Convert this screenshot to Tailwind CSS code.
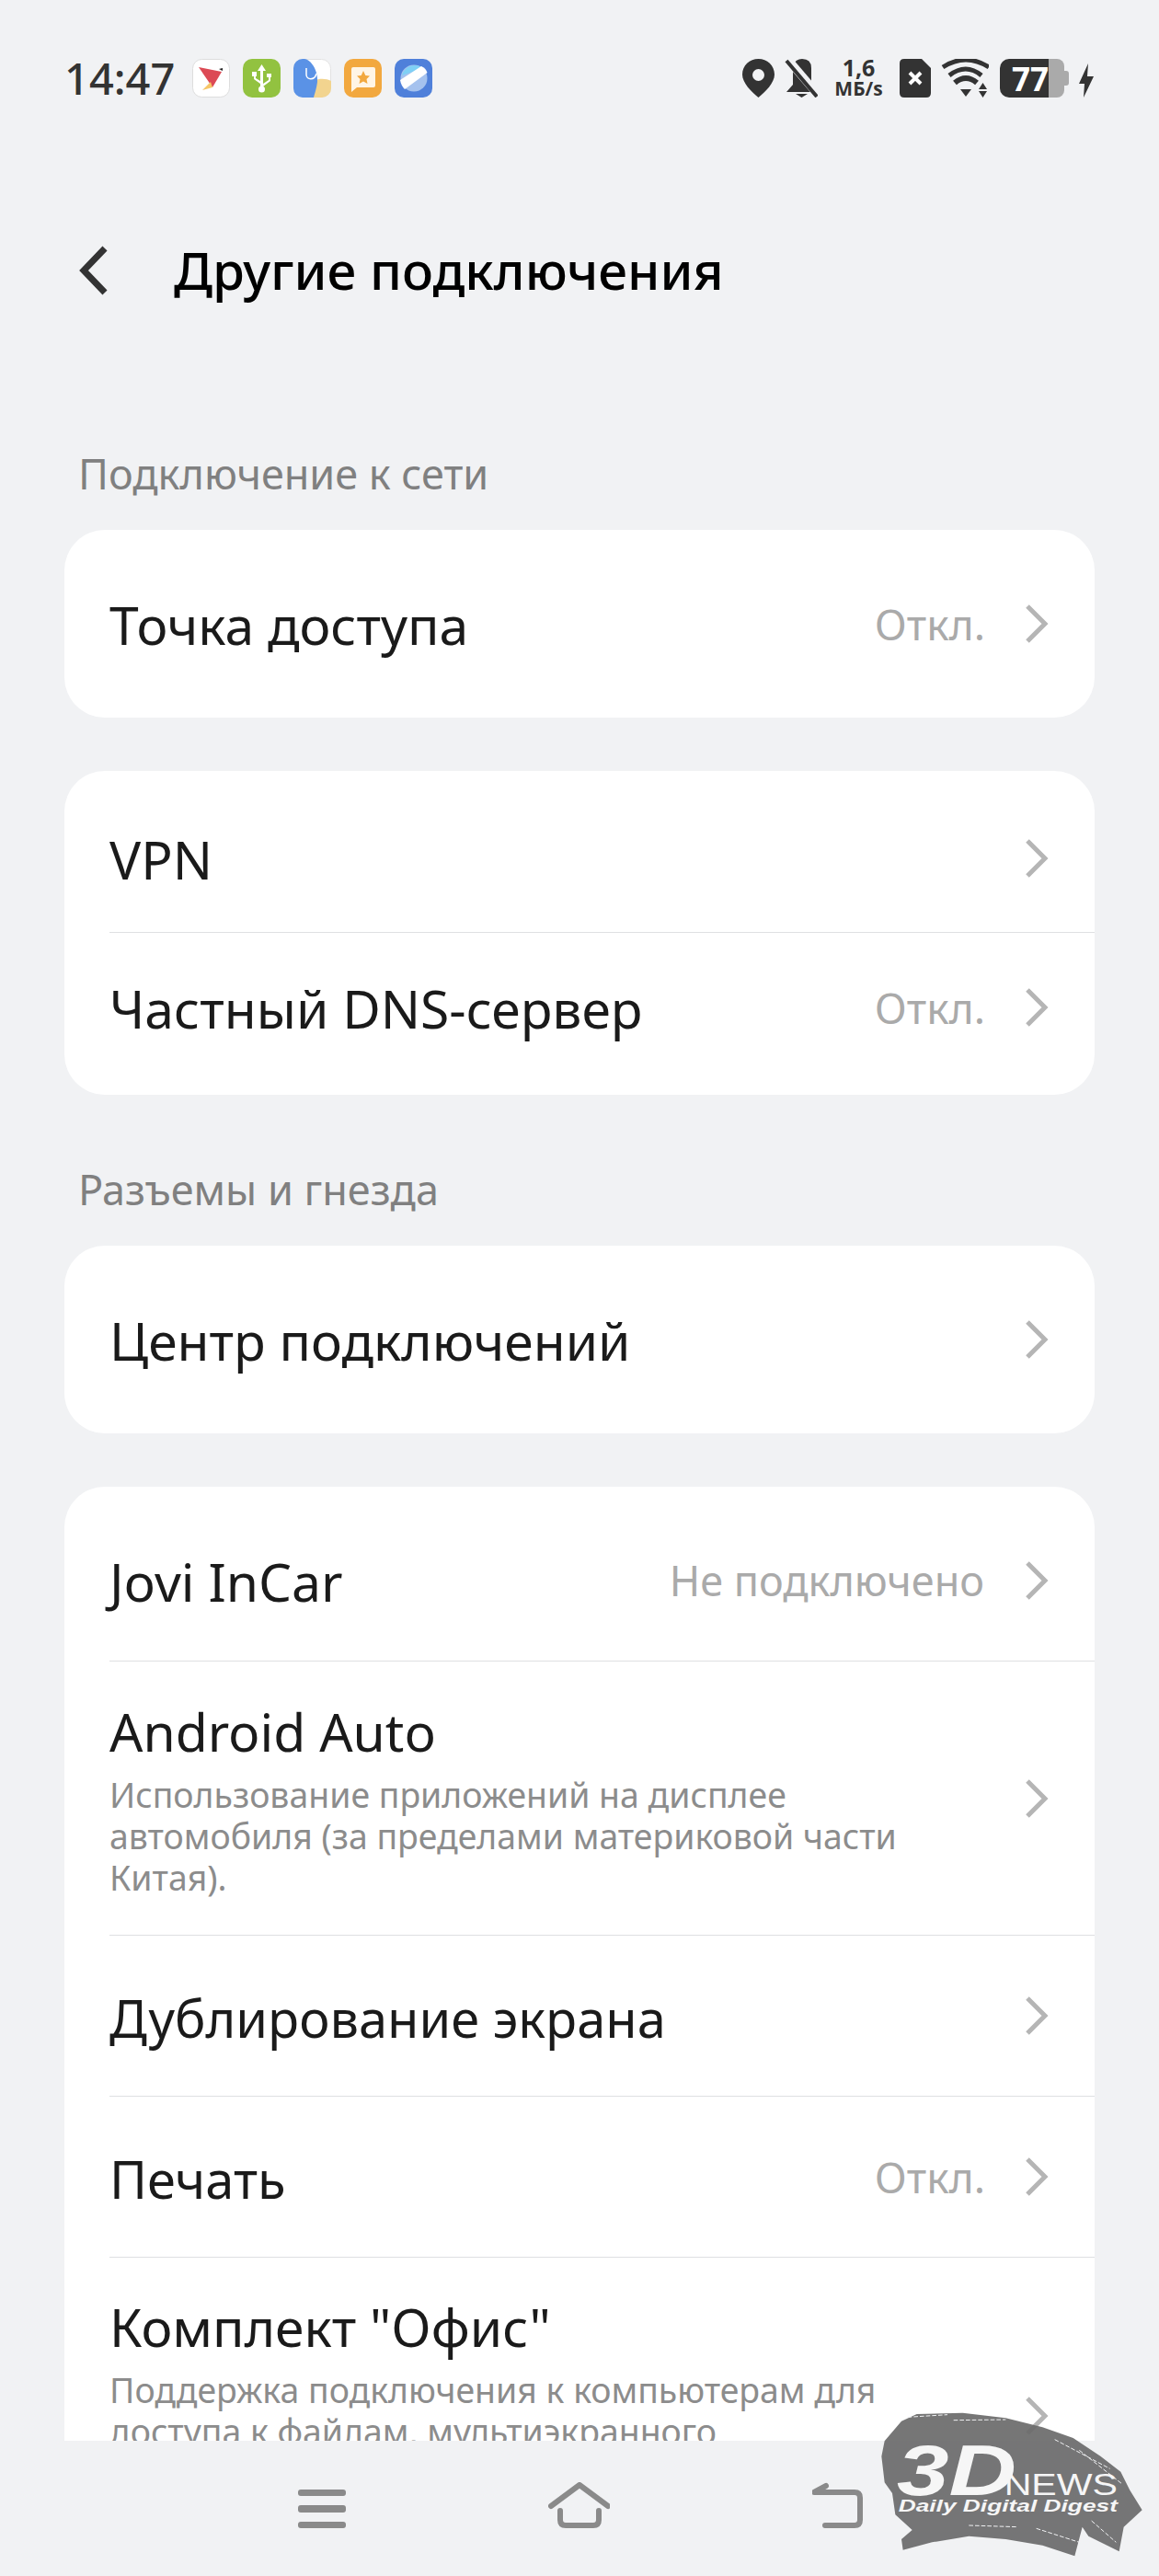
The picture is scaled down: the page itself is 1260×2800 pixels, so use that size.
<!DOCTYPE html>
<html lang="ru">
<head>
    <meta charset="UTF-8">
    <title>Другие подключения</title>
    <script src="https://cdn.jsdelivr.net/npm/@tailwindcss/browser@4"></script>
</head>
<body class="bg-[#f1f2f4]">
    <div class="relative h-[2800px] w-[1260px] overflow-hidden flex flex-col font-['Noto_Sans',sans-serif]">
        <!-- Status bar -->
        <div class="flex items-center h-[42px] mt-[64px] pl-[70px] shrink-0">
            <span class="text-[47px] leading-[42px] font-medium text-[#333] w-[139px]">14:47</span>
            <div class="flex gap-[14px]">
                <svg class="w-[41px] h-[42px]" viewBox="0 0 41 42"><rect x=".5" y=".5" width="40" height="41" rx="10" fill="#fff" stroke="#ddd"/><path d="M7 9 32 14 22 31Z" fill="#dc4a55"/><path d="M22 31 11 34 20 25Z" fill="#f6c667"/><path d="M29 11l4-1 0 3z" fill="#222"/></svg>
                <svg class="w-[41px] h-[42px]" viewBox="0 0 41 42"><rect width="41" height="42" rx="10" fill="#92c240"/><path d="M20.5 6 25 13H22V27L28 23V20H26V16H31V20H30V24L22 30V32H19V27L12 22V19H10V14H15V19H14V21L19 24V13H16Z" fill="#fff"/><circle cx="20.5" cy="33" r="3.5" fill="#fff"/></svg>
                <svg class="w-[41px] h-[42px]" viewBox="0 0 41 42"><rect x=".5" y=".5" width="40" height="41" rx="10" fill="#fff" stroke="#e2e2e2"/><path d="M41 22V32A10 10 0 0 1 31 42H15V28C22 21 34 20 41 24Z" fill="#f2d48f"/><path d="M10 0H12C19 1 27 12 26 25 25 33 23 38 22 42H10A10 10 0 0 1 0 32V10A10 10 0 0 1 10 0Z" fill="#5a92e6"/><path d="M14 10V17C14 23 23 24 25 16" fill="none" stroke="#fff" stroke-width="1.5"/></svg>
                <svg class="w-[41px] h-[42px]" viewBox="0 0 41 42"><rect width="41" height="42" rx="10" fill="#f2a83f"/><path d="M10 9H32Q34 9 34 11V29Q34 31 32 31H14L8 36V11Q8 9 10 9Z" fill="#fff5e6"/><path d="M21 13 23.3 18 28 18.5 24.5 22 25.5 27 21 24.5 16.500 27 17.500 22 14 18.500 18.700 18Z" fill="#f2a83f"/></svg>
                <svg class="w-[41px] h-[42px]" viewBox="0 0 41 42"><rect width="41" height="42" rx="10" fill="#4f80da"/><circle cx="21" cy="21" r="14.500" fill="#a5c2ee"/><path d="M8 18A14.500 14.500 0 0 1 31 10Z" fill="#7fd0f5"/><path d="M6 23 29 8Q34 10 35.500 15L11 33Q7 29 6 23Z" fill="#fff"/></svg>
            </div>
            <div class="ml-auto flex items-center h-[42px] pr-[71px] text-[#333]">
                <svg class="w-[35px] h-[42px]" viewBox="0 0 35 42"><path fill-rule="evenodd" d="M17.500 0C27 0 35 7 35 17 35 26 25 36 17.500 42 10 36 0 26 0 17 0 7 8 0 17.500 0ZM17.500 11A6.500 6.500 0 1 0 17.500 24 6.500 6.500 0 1 0 17.500 11Z" fill="#333"/></svg>
                <svg class="w-[36px] h-[42px] ml-[11px]" viewBox="0 0 36 42"><path d="M9 7Q12 0 19 0 29 0 29 10V27L36 36H2L9 28Z" fill="#333"/><path d="M12 38H25L18.500 42Z" fill="#333"/><path d="M3 0 38 41" stroke="#f1f2f4" stroke-width="9"/><path d="M2 2 35 41" stroke="#333" stroke-width="4"/></svg>
                <div class="w-[53px] ml-[18px] flex flex-col items-center font-['Open_Sans',sans-serif] font-bold">
                    <span class="text-[25px] leading-[23px]">1,6</span>
                    <span class="text-[21px] leading-[23px] whitespace-nowrap">МБ/s</span>
                </div>
                <svg class="w-[34px] h-[42px] ml-[18px]" viewBox="0 0 34 42"><path d="M5 0H24L34 10V37Q34 42 29 42H5Q0 42 0 37V5Q0 0 5 0Z" fill="#333"/><path d="M11 15 23 27M23 15 11 27" stroke="#fff" stroke-width="4"/></svg>
                <svg class="w-[52px] h-[42px] ml-[11px]" viewBox="0 0 52 42"><path d="M2 9Q27-7 52 9" fill="none" stroke="#333" stroke-width="5"/><path d="M9 18Q27 4 44 18" fill="none" stroke="#333" stroke-width="5"/><path d="M15 26Q27 16 39 26" fill="none" stroke="#333" stroke-width="6"/><path d="M21 33H33L27 41ZM41 33H50L45.500 26ZM41 35H50L45.500 42Z" fill="#333"/></svg>
                <div class="flex items-stretch h-[42px] ml-[12px]">
                    <div class="w-[53px] bg-[#333] rounded-l-[10px] flex items-center justify-end text-white text-[35px] font-bold leading-none font-['Open_Sans',sans-serif]">77</div>
                    <div class="w-[17px] bg-[#aaa] rounded-r-[8px]"></div>
                    <div class="w-[5px] h-[16px] bg-[#aaa] self-center rounded-r-[3px]"></div>
                </div>
                <svg class="w-[16px] h-[37px] ml-[11px] mt-[4px]" viewBox="0 0 16 37"><path d="M10 0 0 22H6L5 37 16 14H9Z" fill="#333"/></svg>
            </div>
        </div>

        <!-- Header -->
        <div class="flex items-center h-[108px] mt-[134px] shrink-0">
            <svg class="w-[32px] h-[54px] ml-[86px]" viewBox="0 0 32 54"><path d="M28 3 5 27 28 51" fill="none" stroke="#333" stroke-width="7"/></svg>
            <h1 class="ml-[71px] mb-[2px] text-[56.6px] leading-none font-medium text-black whitespace-nowrap">Другие подключения</h1>
        </div>

        <!-- Settings list -->
        <main class="h-[2305px] shrink-0 overflow-hidden px-[70px]">
            <h2 class="mt-[137px] mb-[31px] h-[60px] pl-[15px] flex items-center text-[45px] text-[#808080]">Подключение к сети</h2>
            <section class="bg-white rounded-[44px] py-[14px]">
                <div class="h-[176px] ml-[49px] pr-[50px] flex items-center">
                    <span class="mt-[4px] text-[57px] text-[#1a1a1a]">Точка доступа</span>
                    <span class="ml-auto mr-[-1px] text-[46px] text-[#aaa]">Откл.</span>
                    <svg class="w-[26px] h-[42px] ml-[44px]" viewBox="0 0 26 42"><path d="M3 2 22 21 3 40" fill="none" stroke="#b5b5b5" stroke-width="5"/></svg>
                </div>
            </section>

            <section class="bg-white rounded-[44px] py-[14px] mt-[58px]">
                <div class="h-[162px] ml-[49px] pr-[50px] flex items-center border-b border-[#dfe0e2]">
                    <span class="mt-[5px] text-[57px] text-[#1a1a1a]">VPN</span>
                    <svg class="ml-auto w-[26px] h-[42px]" viewBox="0 0 26 42"><path d="M3 2 22 21 3 40" fill="none" stroke="#b5b5b5" stroke-width="5"/></svg>
                </div>
                <div class="h-[162px] ml-[49px] pr-[50px] flex items-center">
                    <span class="mt-[4px] text-[57px] text-[#1a1a1a]">Частный DNS-сервер</span>
                    <span class="ml-auto mr-[-1px] text-[46px] text-[#aaa]">Откл.</span>
                    <svg class="w-[26px] h-[42px] ml-[44px]" viewBox="0 0 26 42"><path d="M3 2 22 21 3 40" fill="none" stroke="#b5b5b5" stroke-width="5"/></svg>
                </div>
            </section>

            <h2 class="mt-[73px] mb-[31px] h-[60px] pl-[15px] flex items-center text-[45px] text-[#808080]">Разъемы и гнезда</h2>
            <section class="bg-white rounded-[44px] py-[14px]">
                <div class="h-[176px] ml-[49px] pr-[50px] flex items-center">
                    <span class="mt-[4px] text-[57px] text-[#1a1a1a]">Центр подключений</span>
                    <svg class="ml-auto w-[26px] h-[42px]" viewBox="0 0 26 42"><path d="M3 2 22 21 3 40" fill="none" stroke="#b5b5b5" stroke-width="5"/></svg>
                </div>
            </section>

            <section class="bg-white rounded-t-[44px] pt-[14px] mt-[58px]">
                <div class="h-[176px] ml-[49px] pr-[50px] flex items-center border-b border-[#dfe0e2]">
                    <span class="mt-[4px] text-[57px] text-[#1a1a1a]">Jovi InCar</span>
                    <span class="ml-auto text-[45px] text-[#aaa]">Не подключено</span>
                    <svg class="w-[26px] h-[42px] ml-[44px]" viewBox="0 0 26 42"><path d="M3 2 22 21 3 40" fill="none" stroke="#b5b5b5" stroke-width="5"/></svg>
                </div>
                <div class="h-[298px] ml-[49px] pr-[50px] flex items-center border-b border-[#dfe0e2]">
                    <div class="w-[880px]">
                        <div class="mb-[10px] text-[57px] leading-[72px] text-[#1a1a1a]">Android Auto</div>
                        <p class="text-[37.4px] leading-[45px] text-[#8c8c8c]">Использование приложений на дисплее автомобиля (за пределами материковой части Китая).</p>
                    </div>
                    <svg class="ml-auto w-[26px] h-[42px]" viewBox="0 0 26 42"><path d="M3 2 22 21 3 40" fill="none" stroke="#b5b5b5" stroke-width="5"/></svg>
                </div>
                <div class="h-[175px] ml-[49px] pr-[50px] flex items-center border-b border-[#dfe0e2]">
                    <span class="mt-[4px] text-[56px] text-[#1a1a1a]">Дублирование экрана</span>
                    <svg class="ml-auto w-[26px] h-[42px]" viewBox="0 0 26 42"><path d="M3 2 22 21 3 40" fill="none" stroke="#b5b5b5" stroke-width="5"/></svg>
                </div>
                <div class="h-[175px] ml-[49px] pr-[50px] flex items-center border-b border-[#dfe0e2]">
                    <span class="mt-[4px] text-[56px] text-[#1a1a1a]">Печать</span>
                    <span class="ml-auto mr-[-1px] text-[46px] text-[#aaa]">Откл.</span>
                    <svg class="w-[26px] h-[42px] ml-[44px]" viewBox="0 0 26 42"><path d="M3 2 22 21 3 40" fill="none" stroke="#b5b5b5" stroke-width="5"/></svg>
                </div>
                <div class="h-[344px] ml-[49px] pr-[50px] pt-[39px] flex items-start">
                    <div class="w-[880px]">
                        <div class="mb-[10px] text-[57px] leading-[72px] text-[#1a1a1a]">Комплект "Офис"</div>
                        <p class="text-[37.4px] leading-[45px] text-[#8c8c8c]">Поддержка подключения к компьютерам для доступа к файлам, мультиэкранного</p>
                    </div>
                    <svg class="ml-auto mt-[112px] w-[26px] h-[42px]" viewBox="0 0 26 42"><path d="M3 2 22 21 3 40" fill="none" stroke="#b5b5b5" stroke-width="5"/></svg>
                </div>
            </section>
        </main>

        <!-- Navigation bar -->
        <nav class="flex items-end h-[95px] pl-[324px] gap-[220px] shrink-0">
            <div class="w-[52px] flex flex-col gap-[10px]">
                <div class="h-[7px] rounded-[3px] bg-[#8a8a8a]"></div>
                <div class="h-[8px] rounded-[3px] bg-[#8a8a8a]"></div>
                <div class="h-[7px] rounded-[3px] bg-[#8a8a8a]"></div>
            </div>
            <svg class="w-[67px] h-[50px]" viewBox="0 0 67 50"><path d="M3 26 34 3 65 26" fill="none" stroke="#8a8a8a" stroke-width="6" stroke-linecap="round" stroke-linejoin="round"/><path d="M13 31V41Q13 47 19 47H49Q55 47 55 41V31" fill="none" stroke="#8a8a8a" stroke-width="6" stroke-linecap="round"/></svg>
            <svg class="w-[56px] h-[50px]" viewBox="0 0 56 50"><path d="M15 4 2 11H46Q52 11 52 17V41Q52 47 46 47H14" fill="none" stroke="#8a8a8a" stroke-width="6" stroke-linecap="round" stroke-linejoin="round"/></svg>
        </nav>

        <!-- Watermark -->
        <svg class="absolute left-[920px] top-[2600px] w-[340px] h-[200px]" viewBox="0 0 1020 600">
            <path d="M180 95 230 72 380 68 520 85 640 115 740 150 830 210 895 260 925 320 965 385 905 440 890 520 790 470 770 440 745 535 640 500 520 480 400 470 280 490 185 515 180 480 215 450 160 400 150 330 125 295 115 210 125 160Z" fill="#6a6a6a" fill-opacity=".92"/>
            <path d="M200 82 330 74M350 92 520 90M680 155 860 250M760 190 900 300M400 435 560 440M620 445 760 490M800 420 880 490" stroke="#f1f2f4" stroke-width="3" stroke-dasharray="14 6" fill="none"/>
            <text x="165" y="335" font-family="Liberation Sans" font-weight="700" font-style="italic" font-size="232" textLength="390" lengthAdjust="spacingAndGlyphs" fill="#f6f6f6">3D</text>
            <text x="515" y="335" font-family="Liberation Sans" font-size="97" textLength="370" lengthAdjust="spacingAndGlyphs" fill="#f6f6f6">NEWS</text>
            <text x="170" y="390" font-family="Liberation Sans" font-weight="700" font-style="italic" font-size="54" textLength="715" lengthAdjust="spacingAndGlyphs" fill="#f6f6f6">Daily Digital Digest</text>
        </svg>
    </div>
</body>
</html>
